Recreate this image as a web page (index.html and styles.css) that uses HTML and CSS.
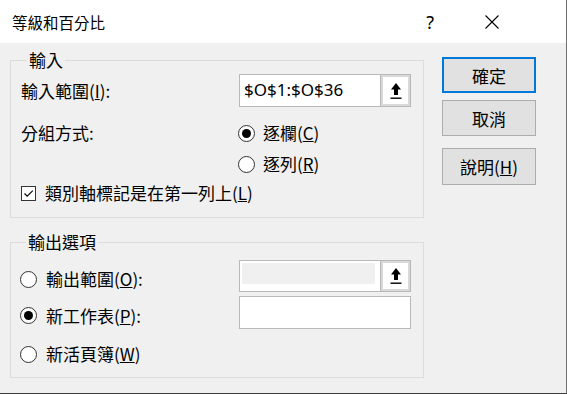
FILE: index.html
```html
<!DOCTYPE html>
<html lang="zh-Hant">
<head>
    <meta charset="UTF-8">
    <meta name="viewport" content="width=device-width, initial-scale=1.0">
    <title>等級和百分比</title>
    <link rel="stylesheet" href="styles.css">
</head>
<body>
    <div class="dialog">
        <div class="titlebar">
            <span class="title">等級和百分比</span>
            <span class="help">?</span>
            <span class="close">
                <svg width="14" height="14" viewBox="0 0 14 14"><path d="M0.5 0.5 L13.5 13.5 M13.5 0.5 L0.5 13.5" stroke="#000" stroke-width="1.1" fill="none"/></svg>
            </span>
        </div>

        <div class="content">
            <div class="groups">
                <fieldset class="group group-input">
                    <legend>輸入</legend>
                    <div class="row row-range">
                        <span class="label">輸入範圍(<u>I</u>):</span>
                        <div class="refedit">
                            <span class="refedit-text">$O$1:$O$36</span>
                            <span class="refbtn">
                                <span class="refbtn-inner">
                                    <svg width="12" height="18" viewBox="0 0 12 18"><path d="M6 1 L11 7.5 L8 7.5 L8 13 L4 13 L4 7.5 L1 7.5 Z" fill="#000"/><rect x="0.5" y="15.5" width="11" height="1.4" fill="#000"/></svg>
                                </span>
                            </span>
                        </div>
                    </div>
                    <div class="row row-group">
                        <span class="label">分組方式:</span>
                        <span class="option"><span class="radio checked"></span>逐欄(<u>C</u>)</span>
                    </div>
                    <div class="row row-group2">
                        <span class="label"></span>
                        <span class="option"><span class="radio"></span>逐列(<u>R</u>)</span>
                    </div>
                    <div class="row row-check">
                        <span class="checkbox">
                            <svg width="13" height="13" viewBox="0 0 13 13"><path d="M2.5 6.5 L5.2 9.2 L10.8 3.6" stroke="#000" stroke-width="1.1" fill="none"/></svg>
                        </span>
                        類別軸標記是在第一列上(<u>L</u>)
                    </div>
                </fieldset>

                <fieldset class="group group-output">
                    <legend>輸出選項</legend>
                    <div class="row out-range">
                        <span class="option out-label"><span class="radio"></span>輸出範圍(<u>O</u>):</span>
                        <div class="refedit">
                            <span class="refedit-text disabled"></span>
                            <span class="refbtn">
                                <span class="refbtn-inner">
                                    <svg width="12" height="18" viewBox="0 0 12 18"><path d="M6 1 L11 7.5 L8 7.5 L8 13 L4 13 L4 7.5 L1 7.5 Z" fill="#000"/><rect x="0.5" y="15.5" width="11" height="1.4" fill="#000"/></svg>
                                </span>
                            </span>
                        </div>
                    </div>
                    <div class="row out-sheet">
                        <span class="option out-label"><span class="radio checked"></span>新工作表(<u>P</u>):</span>
                        <div class="textbox"></div>
                    </div>
                    <div class="row out-book">
                        <span class="option out-label"><span class="radio"></span>新活頁簿(<u>W</u>)</span>
                    </div>
                </fieldset>
            </div>

            <div class="buttons">
                <button class="btn btn-default">確定</button>
                <button class="btn">取消</button>
                <button class="btn btn-help">說明(<u>H</u>)</button>
            </div>
        </div>
    </div>
</body>
</html>
```

FILE: styles.css
```css
body {
    margin: 0;
    font-family: "Noto Sans CJK TC", "Noto Sans", sans-serif;
    font-size: 17px;
    color: #000;
}
.dialog {
    width: 567px;
    height: 394px;
    box-sizing: border-box;
    background: #f0f0f0;
    border-right: 1px solid #6f6f6f;
    border-bottom: 1px solid #3a3a3a;
    overflow: hidden;
}
.titlebar {
    height: 43px;
    background: #fff;
    display: flex;
    align-items: center;
    padding-left: 12px;
}
.title {
    font-size: 15.5px;
    line-height: 22px;
    flex: 1;
}
.help {
    font-family: "Noto Sans", sans-serif;
    font-size: 18px;
    line-height: 22px;
    margin-right: 51px;
}
.close {
    display: flex;
    margin-right: 67px;
}
.content {
    display: flex;
    padding-left: 10px;
}
.groups {
    width: 414px;
}
.group {
    margin: 0;
    border: 1px solid #dcdcdc;
    padding: 0 12px 0 10px;
    min-width: 0;
}
.group legend {
    margin-left: 6px;
    padding: 0 2px;
    line-height: 22px;
}
.group-input {
    margin-top: 6px;
    padding-top: 3px;
    padding-bottom: 13px;
}
.group-output {
    margin-top: 13px;
    padding-top: 7px;
    padding-bottom: 12px;
    padding-left: 9px;
}
.row {
    display: flex;
    align-items: center;
    line-height: 22px;
}
.label {
    width: 218px;
    flex: none;
}
.row-range {
    height: 33px;
}
.row-group {
    margin-top: 15px;
}
.row-group2 {
    margin-top: 9px;
}
.row-check {
    margin-top: 7px;
}
.out-range {
    height: 32px;
}
.out-sheet {
    height: 33px;
    margin-top: 4px;
}
.out-book {
    margin-top: 14px;
}
.out-label {
    width: 219px;
    flex: none;
    position: relative;
    top: 3px;
}
.out-book .out-label {
    top: 0;
}
.option {
    display: flex;
    align-items: center;
}
.radio {
    width: 17px;
    height: 17px;
    box-sizing: border-box;
    border: 1px solid #333;
    border-radius: 50%;
    background: #fff;
    margin-right: 8px;
    margin-left: -1px;
    display: flex;
    align-items: center;
    justify-content: center;
    flex: none;
}
.out-label .radio {
    margin-left: 0;
    margin-right: 9px;
}
.radio.checked::after {
    content: "";
    width: 9px;
    height: 9px;
    border-radius: 50%;
    background: #000;
}
.checkbox {
    width: 15px;
    height: 15px;
    box-sizing: border-box;
    border: 1px solid #333;
    background: #fff;
    display: flex;
    align-items: center;
    justify-content: center;
    margin-right: 9px;
}
.refedit {
    width: 172px;
    height: 100%;
    box-sizing: border-box;
    border: 1px solid #b9b9b9;
    background: #fff;
    display: flex;
    padding: 2px 0 2px 2px;
}
.refedit-text {
    flex: 1;
    font-family: "Noto Sans", sans-serif;
    font-size: 17px;
    line-height: 26px;
    padding-left: 2px;
    margin-right: 5px;
}
.refedit-text.disabled {
    background: #f0f0f0;
    margin-top: 0;
    margin-bottom: 5px;
}
.refbtn {
    width: 31px;
    margin: -3px -1px -3px 0;
    box-sizing: border-box;
    border: 1px solid #b8b8b8;
    background: #d9d9d9;
    padding: 2px;
    display: flex;
}
.refbtn-inner {
    flex: 1;
    background: #fff;
    display: flex;
    align-items: center;
    justify-content: center;
}
.textbox {
    width: 172px;
    height: 100%;
    box-sizing: border-box;
    border: 1px solid #b9b9b9;
    background: #fff;
}
.buttons {
    display: flex;
    flex-direction: column;
    margin-left: 18px;
    padding-top: 14px;
}
.btn {
    width: 94px;
    height: 36px;
    box-sizing: border-box;
    background: #e1e1e1;
    border: 1px solid #adadad;
    font-family: "Noto Sans CJK TC", "Noto Sans", sans-serif;
    font-size: 17px;
    color: #000;
    padding: 0;
    margin-bottom: 7px;
}
.btn-default {
    border: 2px solid #0078d7;
}
.btn-help {
    height: 37px;
    margin-top: 5px;
}
```
